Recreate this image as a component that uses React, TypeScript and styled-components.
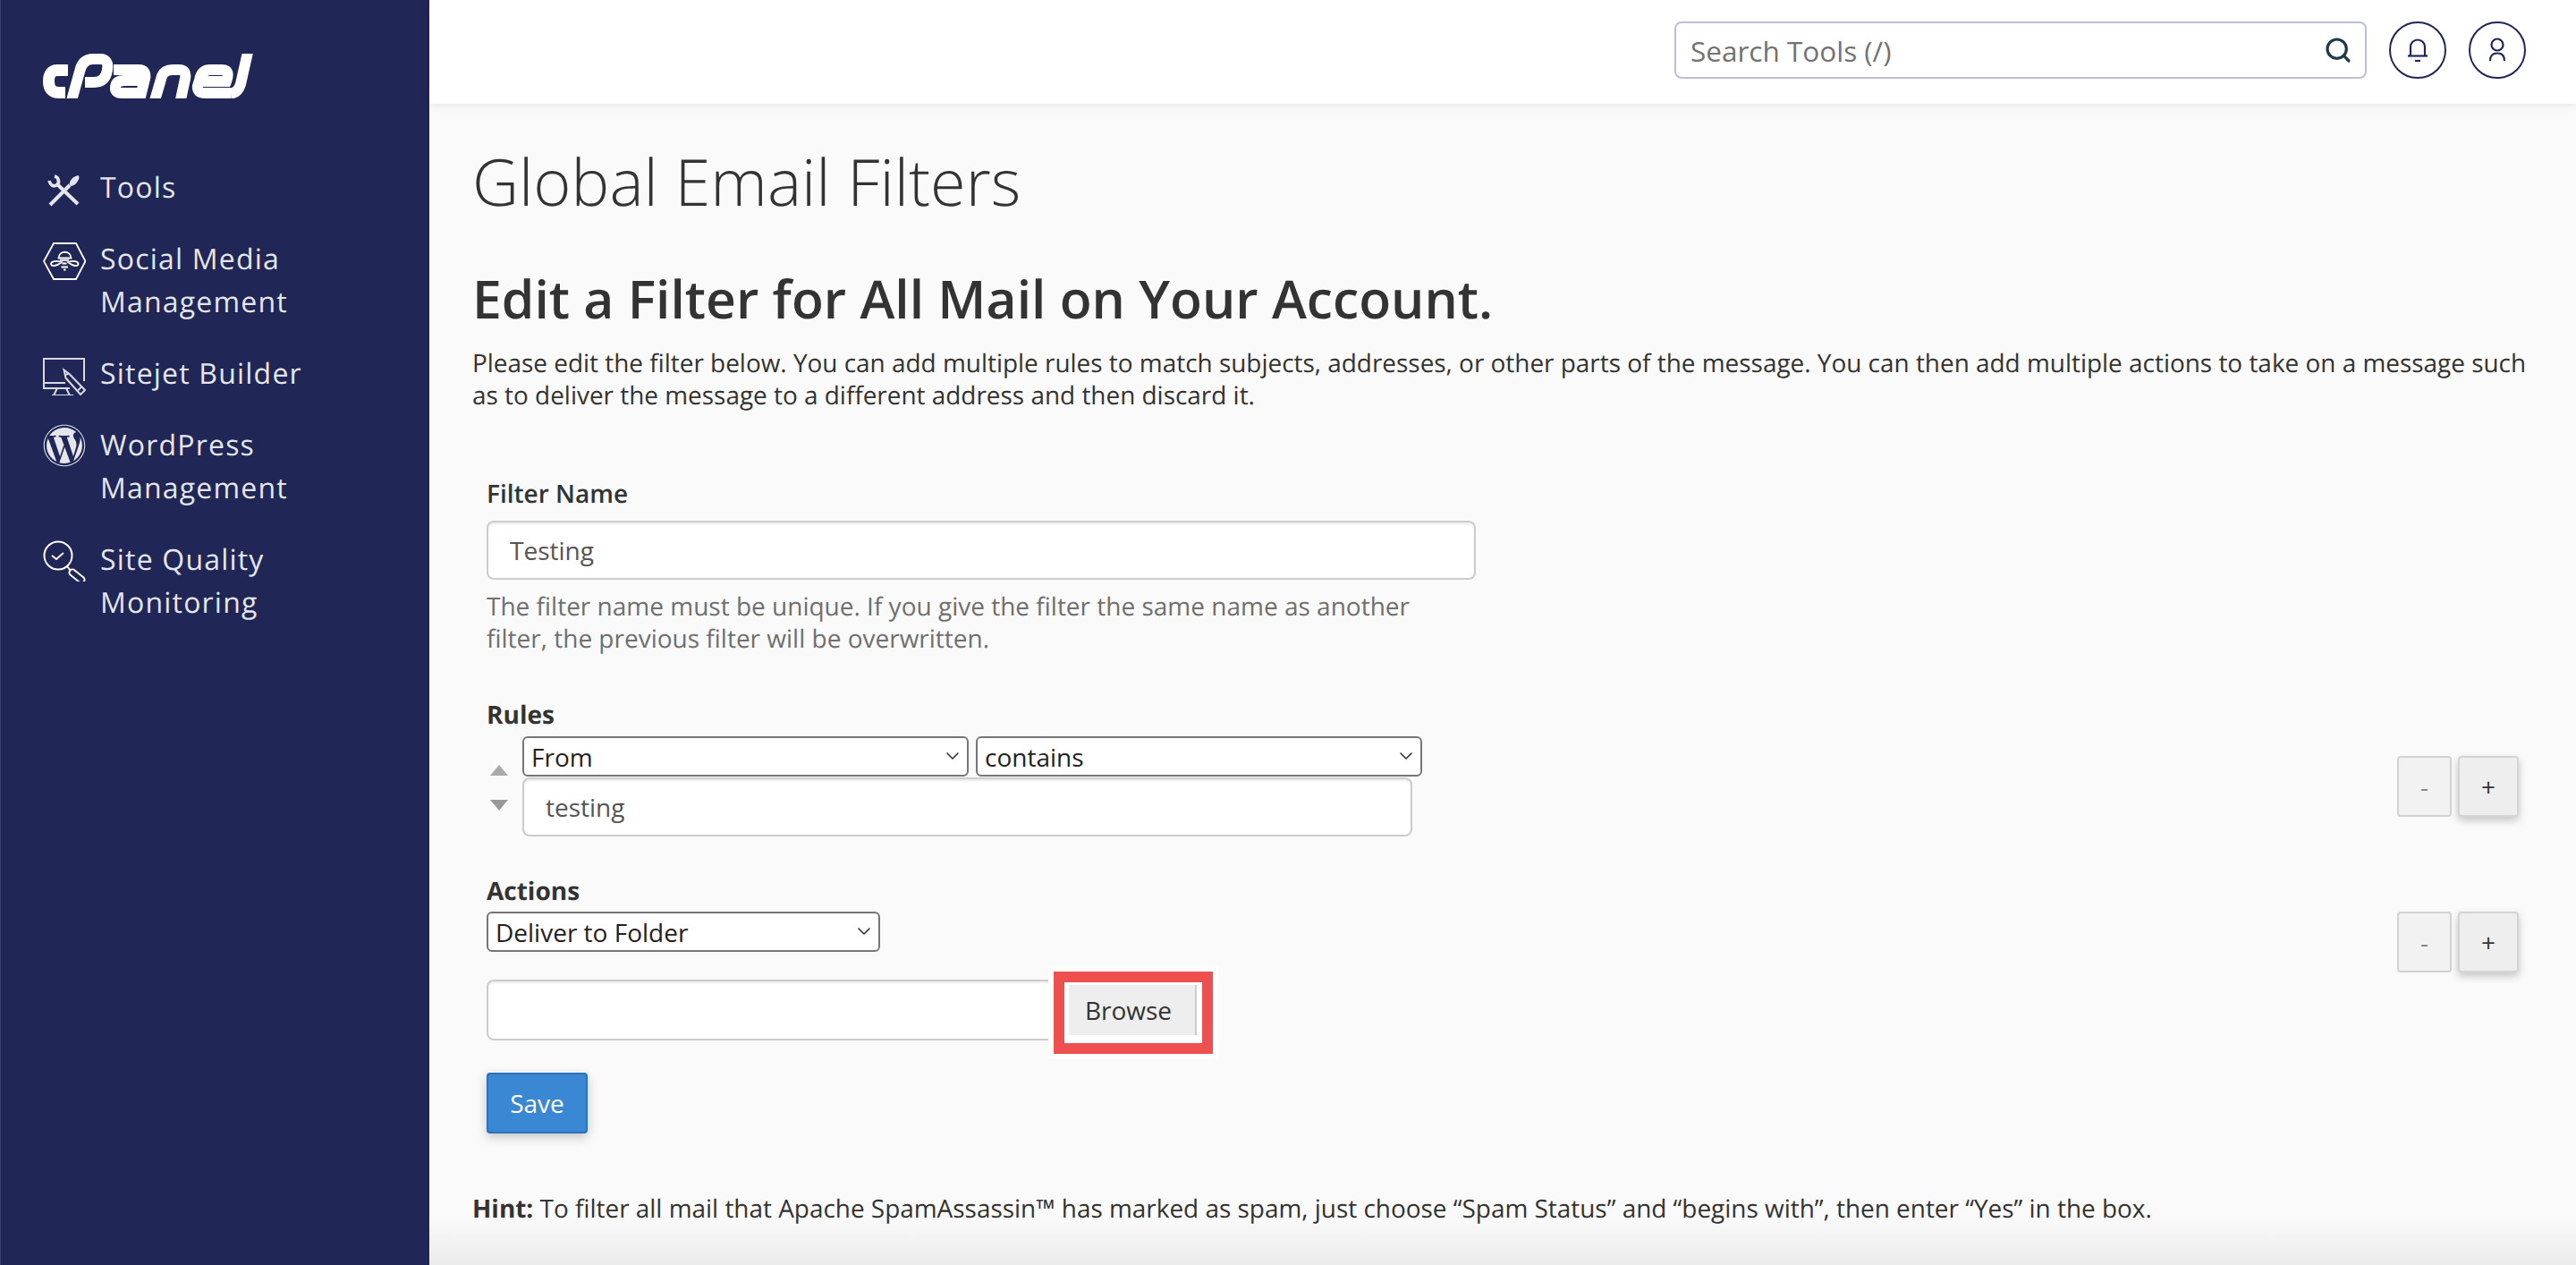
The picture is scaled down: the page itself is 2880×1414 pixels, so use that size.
import React from "react";
import styled, { createGlobalStyle } from "styled-components";
import { Search, ChevronDown } from "lucide-react";
import { FaWordpress } from "react-icons/fa";

const Global = createGlobalStyle`
  html, body { margin: 0; padding: 0; height: 100%; overflow: hidden; }
  body { font-family: "Open Sans", "Noto Sans", sans-serif; font-size: 28px; color: #333; background: #fafafa; text-rendering: geometricPrecision; }
  * { box-sizing: border-box; }
`;

const Shell = styled.div`
  display: grid;
  grid-template-columns: 480px 1fr;
  width: 2880px;
  height: 1414px;
  overflow: hidden;
`;

const Sidebar = styled.aside`
  background: #202655;
  border-left: 1px solid #3a4070;
  padding: 60px 0 0 47px;
  display: flex;
  flex-direction: column;
`;

const LogoMark = styled.svg`
  display: block;
  width: 236px;
  height: 50px;
`;

const NavList = styled.nav`
  display: flex;
  flex-direction: column;
  gap: 32px;
  margin-top: 76px;
`;

const NavItem = styled.a`
  display: grid;
  grid-template-columns: 48px 1fr;
  column-gap: 16px;
  font-size: 32px;
  line-height: 48px;
  letter-spacing: 1.2px;
  color: #e4e6ec;
`;

const NavIcon = styled.svg<{ $tone?: string }>`
  display: block;
  width: 48px;
  height: 48px;
  color: ${(p) => p.$tone || "#e4e6ec"};
`;

const WpBox = styled.span`
  display: block;
  width: 48px;
  height: 48px;
  color: #e4e6ec;
  svg { display: block; }
`;

const Main = styled.main`
  display: flex;
  flex-direction: column;
  min-width: 0;
  background: linear-gradient(#fafafa calc(100% - 54px), #ebebeb);
`;

const Header = styled.header`
  flex: none;
  height: 116px;
  background: #fff;
  box-shadow: 0 2px 10px rgba(0, 0, 0, 0.08);
  display: flex;
  justify-content: flex-end;
  align-items: flex-start;
  gap: 25px;
  padding: 24px 56px 0 0;
`;

const SearchBox = styled.div`
  width: 774px;
  height: 64px;
  border: 2px solid #bdbfd2;
  border-radius: 8px;
  background: #fff;
  display: flex;
  align-items: center;
  padding: 0 14px 0 16px;
  color: #1f3a48;
`;

const SearchInput = styled.input`
  flex: 1;
  min-width: 0;
  border: 0;
  outline: 0;
  background: none;
  font: inherit;
  font-size: 31.5px;
  color: #333;
  padding: 0;
  &::placeholder { color: #727272; opacity: 1; }
`;

const RoundButton = styled.button`
  width: 64px;
  height: 64px;
  padding: 0;
  border: 2px solid #20265a;
  border-radius: 50%;
  background: #fff;
  display: block;
  svg { display: block; margin: -2px; }
`;

const Content = styled.div`
  padding: 47px 48px 0;
`;

const Title = styled.h1`
  margin: 0;
  font-size: 72px;
  line-height: 80px;
  font-weight: 300;
  color: #333;
`;

const Subtitle = styled.h2`
  margin: 57px 0 0;
  font-size: 58.8px;
  line-height: 68px;
  font-weight: 600;
  color: #333;
`;

const Intro = styled.p`
  margin: 20px 0 0;
  font-size: 27.93px;
  line-height: 36px;
  color: #333;
`;

const Form = styled.form`
  padding: 0 16px;
`;

const FieldLabel = styled.label<{ $top: number; $heavy?: boolean }>`
  display: block;
  margin-top: ${(p) => p.$top}px;
  font-weight: ${(p) => (p.$heavy ? 700 : 600)};
  line-height: 36px;
  color: #333;
`;

const TextField = styled.input<{ $width: number }>`
  display: block;
  width: ${(p) => p.$width}px;
  height: 66px;
  border: 2px solid #ccc;
  border-radius: 8px;
  background: #fff;
  box-shadow: inset 0 2px 2px rgba(0, 0, 0, 0.075);
  font: inherit;
  color: #555;
  padding: 0 24px;
  outline: 0;
`;

const NameField = styled(TextField)`
  margin-top: 12px;
`;

const HelpText = styled.p`
  width: 1106px;
  margin: 12px 0 0;
  line-height: 36px;
  color: #6f6f6f;
`;

const RulesRow = styled.div`
  display: flex;
  align-items: center;
  justify-content: space-between;
  margin-top: 6px;
`;

const RuleLeft = styled.div`
  display: flex;
  align-items: flex-start;
`;

const SortColumn = styled.div`
  width: 40px;
  padding: 32px 0 0 4px;
  display: flex;
  flex-direction: column;
  gap: 27px;
`;

const SortArrow = styled.span<{ $down?: boolean }>`
  display: block;
  width: 20px;
  height: 12px;
  background: ${(p) => (p.$down ? "#999" : "#aaa")};
  clip-path: ${(p) => (p.$down ? "polygon(0 0, 100% 0, 50% 100%)" : "polygon(50% 0, 100% 100%, 0 100%)")};
`;

const RuleFields = styled.div`
  display: flex;
  flex-direction: column;
  gap: 1px;
`;

const SelectRow = styled.div`
  display: flex;
  gap: 8px;
`;

const SelectWrap = styled.div<{ $width: number }>`
  position: relative;
  width: ${(p) => p.$width}px;
  height: 45px;
  color: #333;
  svg { position: absolute; right: 6px; top: 10px; pointer-events: none; }
`;

const Select = styled.select`
  appearance: none;
  display: block;
  width: 100%;
  height: 100%;
  border: 2px solid #767676;
  border-radius: 6px;
  background: #fff;
  font: inherit;
  color: #222;
  padding: 0 8px;
  outline: 0;
`;

const Stepper = styled.div`
  display: flex;
  gap: 7px;
`;

const StepButton = styled.button<{ $on?: boolean }>`
  width: ${(p) => (p.$on ? 68 : 61)}px;
  height: 68px;
  padding: 0;
  border: 2px solid ${(p) => (p.$on ? "#d4d4d4" : "#d2d2d2")};
  border-radius: 4px;
  background: ${(p) => (p.$on ? "#eee" : "#f2f2f2")};
  color: ${(p) => (p.$on ? "#333" : "#888")};
  font: inherit;
  font-size: 28px;
  box-shadow: ${(p) => (p.$on ? "0 4px 10px rgba(0,0,0,.22)" : "none")};
`;

const ActionsRow = styled.div`
  display: flex;
  align-items: flex-start;
  justify-content: space-between;
  height: 45px;
  margin-top: 5px;
`;

const BrowseRow = styled.div`
  position: relative;
  display: flex;
  align-items: center;
  margin-top: 31px;
  height: 68px;
`;

const FolderField = styled(TextField)`
  height: 68px;
`;

const BrowseButton = styled.button`
  position: relative;
  z-index: 1;
  width: 143px;
  height: 56px;
  margin-left: 5px;
  padding: 0 8px 0 0;
  border: 0;
  border-right: 2px solid #ccc;
  background: #eee;
  font: inherit;
  color: #333;
`;

const Callout = styled.div`
  position: absolute;
  left: 634px;
  top: -9px;
  width: 178px;
  height: 92px;
  border: 12px solid #ee5050;
  background: #fff;
  box-shadow: 0 0 0 6px #fff;
`;

const SaveButton = styled.button`
  display: block;
  width: 113px;
  height: 68px;
  margin-top: 36px;
  padding: 0;
  border: 2px solid #2d72b8;
  border-radius: 4px;
  background: #3a87d4;
  color: #fff;
  font: inherit;
  box-shadow: 0 4px 12px rgba(0, 0, 0, 0.22);
`;

const Hint = styled.p`
  margin: 66px 0 0;
  font-size: 27.93px;
  line-height: 36px;
  color: #333;
  b { font-weight: 700; }
`;

const Logo = () => (
  <LogoMark viewBox="48 60 236 50" fill="none" stroke="#fff" strokeWidth="12" aria-label="cPanel">
    <path d="M76 78.5H64Q54.5 78.5 54.5 91Q54.5 103.5 66 103.5H73" strokeWidth="13" />
    <path d="M79 116L89 80Q92 66 104 66H112Q122 66 120 78Q118 92 105 92H95" />
    <path d="M127 78H155Q164 78 162 88L158 104H136Q128 104 129 97Q130 90 139 90H160" />
    <path d="M172 116L181 85Q184 78 193 78H200Q209 78 207 88L201 116" />
    <path d="M225 91H253Q258 78 248 78H235Q225 78 223 90L221 96Q220 104 229 104H258" />
    <path d="M278 54L269 94Q266 104 258 104.5" />
  </LogoMark>
);

const ToolsIcon = () => (
  <NavIcon viewBox="48 186 48 48" fill="none" stroke="currentColor">
    <path d="M61 197C66 198 67 205 63 207C60 209 56 207 55 202" strokeWidth="3.6" />
    <path d="M64 206L87 228" strokeWidth="4" />
    <path d="M88 196L88.5 199C87 204 83 208 79 208L77.5 206C78 201 82 197 88 196Z" fill="currentColor" stroke="none" />
    <path d="M78 207L56 229" strokeWidth="4" />
  </NavIcon>
);

const SocialIcon = () => (
  <NavIcon $tone="#fff" viewBox="48 266 48 48" fill="none" stroke="currentColor" strokeWidth="1.8">
    <path d="M49 292L60 272H85L95.5 292L85 312H60Z" />
    <path d="M65.5 288.5C66 279.5 79 279.5 79.5 288.5Z" />
    <path d="M67 290.8H77" />
    <path d="M69 293C63 291 57 292 57 295C57 298 63 298 69 293Z" />
    <path d="M76 293C82 291 87.5 292 87.5 295C87.5 298 82 298 76 293Z" />
    <path d="M69.5 294.5H74.5M68.5 298.5H76M71 301.5H73.5" />
  </NavIcon>
);

const SitejetIcon = () => (
  <NavIcon $tone="#d8dae2" viewBox="48 393 48 48" fill="none" stroke="currentColor" strokeWidth="2">
    <path d="M94 425V400H49V433H78M49 427H73" />
    <path d="M64 433L60 441M74 433L78 441M58 441H82" />
    <path d="M71.5 412.5L77.5 417L95 435L90 440L73.5 421.5Z" />
    <path d="M86.5 436L91.5 431M73 418L77 416.5" />
  </NavIcon>
);

const QualityIcon = () => (
  <NavIcon viewBox="48 602 48 48" fill="none" stroke="#fff">
    <circle cx="65" cy="621" r="15.5" strokeWidth="2" />
    <path d="M58 621L63 625L71 618" strokeWidth="2" />
    <path d="M75 633L79 638" strokeWidth="2" />
    <path d="M81 640L91 648" strokeWidth="9" strokeLinecap="round" />
    <path d="M81 640L91 648" strokeWidth="5" strokeLinecap="round" stroke="#202655" />
  </NavIcon>
);

const BellIcon = () => (
  <svg width="64" height="64" viewBox="0 0 64 64" fill="none" stroke="#20265a" strokeWidth="2.2">
    <path d="M24 38V28.5a8 8 0 0 1 16 0V38" />
    <path d="M21 38.5H43" />
    <path d="M29 44H35" />
  </svg>
);

const UserIcon = () => (
  <svg width="64" height="64" viewBox="0 0 64 64" fill="none" stroke="#20265a" strokeWidth="2.2">
    <circle cx="32" cy="26" r="6.5" />
    <path d="M24 44C24 38 27 35.5 32 35.5C37 35.5 40 38 40 44" />
  </svg>
);

const Chevron = () => <ChevronDown size={24} strokeWidth={1.6} />;

export default function App() {
  return (
    <Shell>
      <Global />
      <Sidebar>
        <Logo />
        <NavList>
          <NavItem><ToolsIcon /><span>Tools</span></NavItem>
          <NavItem><SocialIcon /><span>Social Media<br />Management</span></NavItem>
          <NavItem><SitejetIcon /><span>Sitejet Builder</span></NavItem>
          <NavItem><WpBox><FaWordpress size={48} /></WpBox><span>WordPress<br />Management</span></NavItem>
          <NavItem><QualityIcon /><span>Site Quality<br />Monitoring</span></NavItem>
        </NavList>
      </Sidebar>
      <Main>
        <Header>
          <SearchBox>
            <SearchInput placeholder="Search Tools (/)" readOnly />
            <Search size={32} strokeWidth={2.4} />
          </SearchBox>
          <RoundButton aria-label="Notifications"><BellIcon /></RoundButton>
          <RoundButton aria-label="Account"><UserIcon /></RoundButton>
        </Header>
        <Content>
          <Title>Global Email Filters</Title>
          <Subtitle>Edit a Filter for All Mail on Your Account.</Subtitle>
          <Intro>
            Please edit the filter below. You can add multiple rules to match subjects, addresses, or other parts of the message. You can then add multiple actions to take on a message such as to deliver the message to a different address and then discard it.
          </Intro>
          <Form>
            <FieldLabel $top={74}>Filter Name</FieldLabel>
            <NameField $width={1106} value="Testing" readOnly />
            <HelpText>The filter name must be unique. If you give the filter the same name as another filter, the previous filter will be overwritten.</HelpText>

            <FieldLabel $top={49} $heavy>Rules</FieldLabel>
            <RulesRow>
              <RuleLeft>
                <SortColumn>
                  <SortArrow />
                  <SortArrow $down />
                </SortColumn>
                <RuleFields>
                  <SelectRow>
                    <SelectWrap $width={499}>
                      <Select defaultValue="From"><option>From</option></Select>
                      <Chevron />
                    </SelectWrap>
                    <SelectWrap $width={499}>
                      <Select defaultValue="contains"><option>contains</option></Select>
                      <Chevron />
                    </SelectWrap>
                  </SelectRow>
                  <TextField $width={995} value="testing" readOnly />
                </RuleFields>
              </RuleLeft>
              <Stepper>
                <StepButton>-</StepButton>
                <StepButton $on>+</StepButton>
              </Stepper>
            </RulesRow>

            <FieldLabel $top={43} $heavy>Actions</FieldLabel>
            <ActionsRow>
              <SelectWrap $width={440}>
                <Select defaultValue="Deliver to Folder"><option>Deliver to Folder</option></Select>
                <Chevron />
              </SelectWrap>
              <Stepper>
                <StepButton>-</StepButton>
                <StepButton $on>+</StepButton>
              </Stepper>
            </ActionsRow>
            <BrowseRow>
              <FolderField $width={646} readOnly />
              <Callout />
              <BrowseButton type="button">Browse</BrowseButton>
            </BrowseRow>
            <SaveButton type="button">Save</SaveButton>
          </Form>
          <Hint>
            <b>Hint:</b> To filter all mail that Apache SpamAssassin™ has marked as spam, just choose “Spam Status” and “begins with”, then enter “Yes” in the box.
          </Hint>
        </Content>
      </Main>
    </Shell>
  );
}
